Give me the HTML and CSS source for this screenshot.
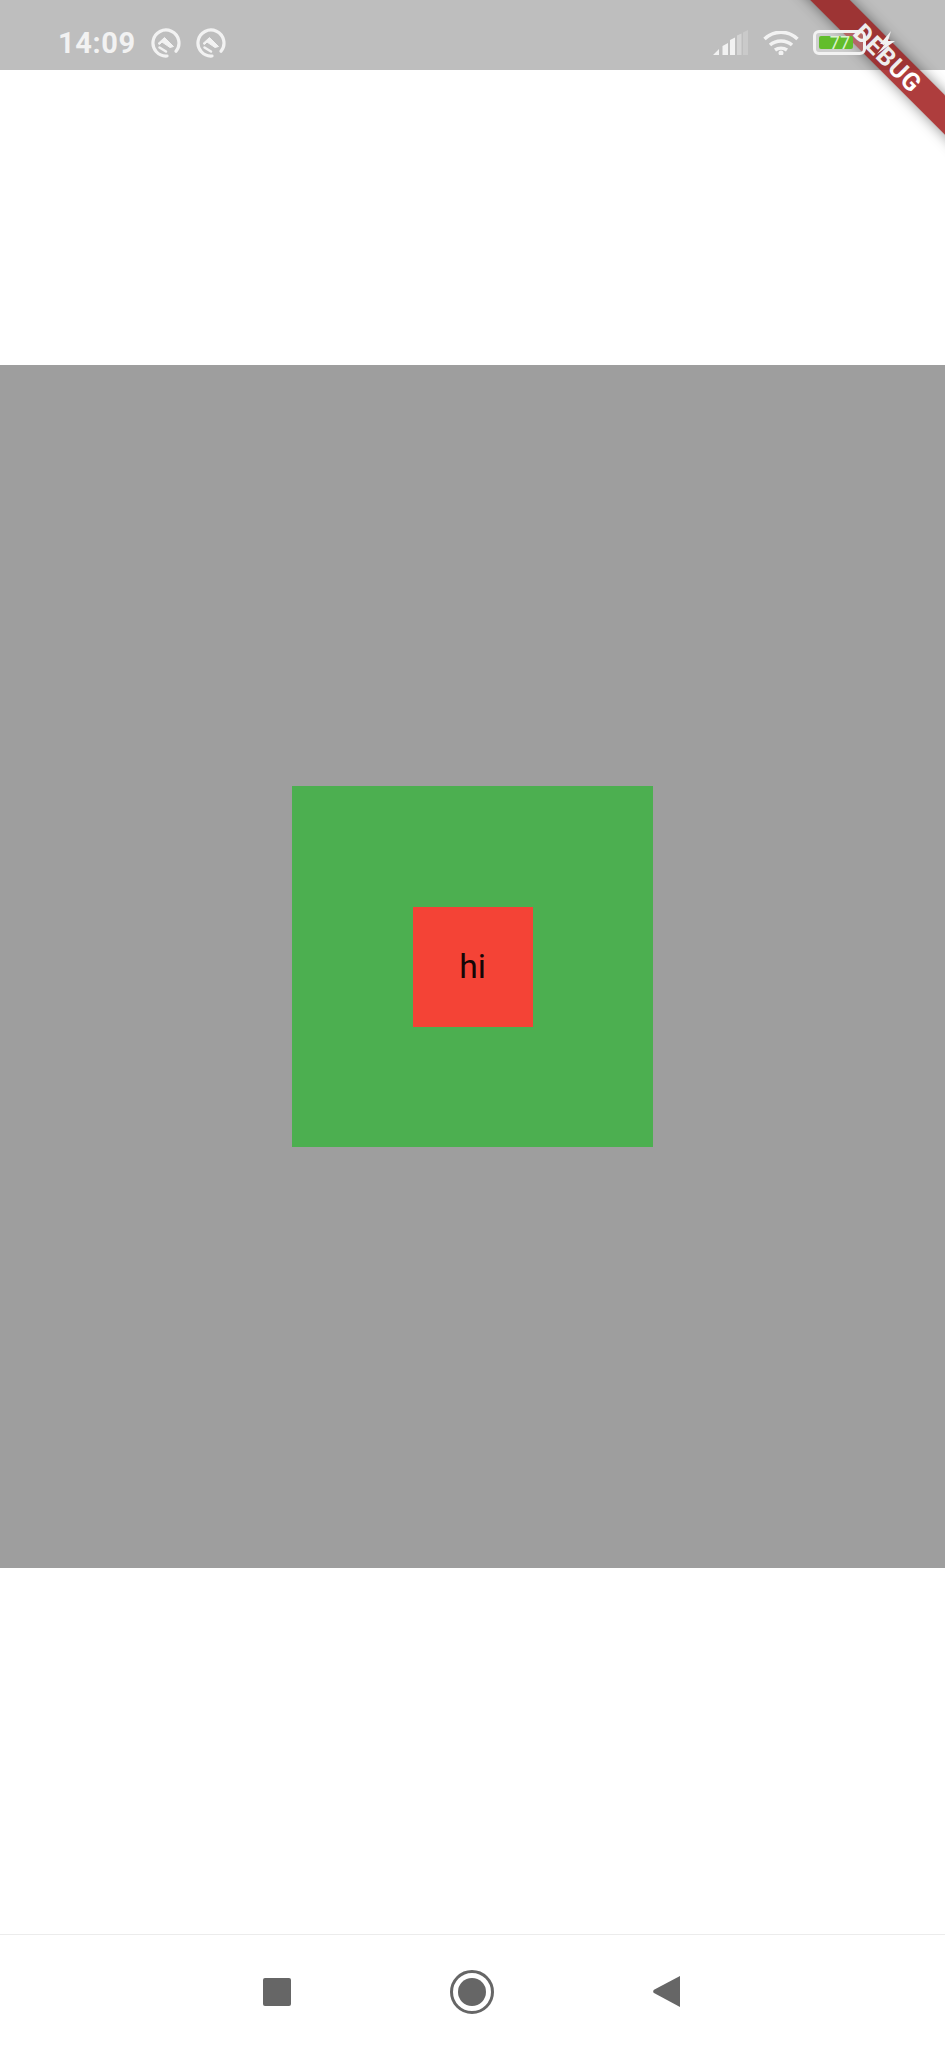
FILE: index.html
```html
<!DOCTYPE html>
<html lang="en">
<head>
<meta charset="utf-8">
<title>Nested boxes</title>
<link rel="stylesheet" href="styles.css">
</head>
<body>
<div class="screen">
  <header class="status">
    <div class="status-left">
      <span class="time">14:09</span>
      <svg class="q" viewBox="0 0 30 30"><path d="M16 28A13 13 0 1 1 25 23.300" fill="none" stroke="#f2f2f2" stroke-width="3.200" stroke-linecap="round"/><path d="M7 15.500 13.500 9.500l9 9-3.500 1-8-5.500-2.500 2.500z" fill="#f2f2f2" stroke="#f2f2f2" stroke-linejoin="round"/><path d="M8.500 19.500 15 23.500" fill="none" stroke="#f2f2f2" stroke-width="2.500" stroke-linecap="round"/></svg>
      <svg class="q" viewBox="0 0 30 30"><path d="M16 28A13 13 0 1 1 25 23.300" fill="none" stroke="#f2f2f2" stroke-width="3.200" stroke-linecap="round"/><path d="M7 15.500 13.500 9.500l9 9-3.500 1-8-5.500-2.500 2.500z" fill="#f2f2f2" stroke="#f2f2f2" stroke-linejoin="round"/><path d="M8.500 19.500 15 23.500" fill="none" stroke="#f2f2f2" stroke-width="2.500" stroke-linecap="round"/></svg>
    </div>
    <div class="status-right">
      <svg class="signal" viewBox="0 0 35 25"><path d="M0 25l6-6v6zM9.500 25v-9l5.500-3v12zM17 25V10l5-2.500V25z" fill="#f2f2f2"/><path d="M24 25V5.500l4.500-2V25z" fill="#d4d4d4"/><path d="M30 25V2.500L35 0v25z" fill="#cacaca"/></svg>
      <svg class="wifi" viewBox="0 0 36 24"><path d="M1.500 8C11-1 25-1 34.500 8M7 14c6-5.500 16-5.500 22 0M12 19c3.500-2.500 8.500-2.500 12 0" fill="none" stroke="#f2f2f2" stroke-width="3.500"/><circle cx="18" cy="22" r="2.500" fill="#f2f2f2"/></svg>
      <div class="battery"><span class="level">77</span></div>
      <svg class="bolt" viewBox="0 0 18 23"><path d="M14 0 3 13h5l-8 10 18-13h-7z" fill="#f2f2f2"/></svg>
    </div>
  </header>
  <main class="content">
    <div class="middle">
      <div class="inner">hi</div>
    </div>
  </main>
  <nav class="nav">
    <span class="nav-square"></span>
    <span class="nav-home"><span class="nav-dot"></span></span>
    <svg class="nav-back" viewBox="0 0 27 31"><path d="M27 0v31L1 17a2 2 0 0 1 0-3.200z" fill="#666"/></svg>
  </nav>
  <div class="banner"><span class="banner-text">DEBUG</span></div>
  <div class="status-scrim"></div>
</div>
</body>
</html>
```
FILE: styles.css
```css
html, body {
  margin: 0;
  padding: 0;
}

.screen {
  position: relative;
  width: 945px;
  height: 2048px;
  overflow: hidden;
  display: flex;
  flex-direction: column;
  background: #fff;
  font-family: Roboto, sans-serif;
}

.status {
  height: 70px;
  flex: none;
  background: #cdcdcd;
  display: flex;
  justify-content: space-between;
  align-items: center;
  padding: 15px 50px 0 58px;
  box-sizing: border-box;
}

.status-left,
.status-right {
  display: flex;
  align-items: center;
  position: relative;
  z-index: 3;
}

.status-left {
  gap: 15px;
}

.status-scrim {
  position: absolute;
  top: 0;
  left: 0;
  right: 0;
  height: 70px;
  z-index: 2;
  background: rgba(0, 0, 0, 0.07);
}

.time {
  font-size: 29px;
  font-weight: 700;
  letter-spacing: 0.6px;
  color: #f2f2f2;
}

.q {
  width: 30px;
  height: 30px;
}

.signal {
  width: 35px;
  height: 25px;
}

.wifi {
  width: 36px;
  height: 24px;
  margin-left: 15px;
}

.battery {
  width: 53px;
  height: 25px;
  margin-left: 14px;
  box-sizing: border-box;
  border: 3px solid #f2f2f2;
  border-radius: 6px;
  padding: 3px;
  background: rgba(255, 255, 255, 0.25);
}

.level {
  display: block;
  width: 34px;
  height: 13px;
  box-sizing: border-box;
  padding-right: 3px;
  background: #62bd2c;
  border-radius: 2px;
  color: #dcf2cf;
  font-size: 18px;
  line-height: 13px;
  text-align: right;
}

.bolt {
  width: 18px;
  height: 23px;
  margin-left: 11px;
}

.content {
  margin-top: 295px;
  height: 1203px;
  flex: none;
  background: #9e9e9e;
  display: flex;
  align-items: center;
  justify-content: center;
}

.middle {
  width: 361px;
  height: 361px;
  background: #4caf50;
  display: flex;
  align-items: center;
  justify-content: center;
}

.inner {
  width: 120px;
  height: 120px;
  background: #f44336;
  display: flex;
  align-items: center;
  justify-content: center;
  font-size: 33.6px;
  color: #140606;
}

.nav {
  margin-top: auto;
  height: 114px;
  flex: none;
  box-sizing: border-box;
  border-top: 1px solid #ececec;
  padding-right: 3px;
  display: flex;
  align-items: center;
  justify-content: center;
  gap: 159px;
}

.nav-square {
  width: 28px;
  height: 28px;
  background: #666;
  border-radius: 2px;
}

.nav-home {
  width: 44px;
  height: 44px;
  box-sizing: border-box;
  border: 3.5px solid #666;
  border-radius: 50%;
  display: flex;
  align-items: center;
  justify-content: center;
}

.nav-dot {
  width: 28px;
  height: 28px;
  background: #666;
  border-radius: 50%;
}

.nav-back {
  width: 27px;
  height: 31px;
}

.banner {
  position: absolute;
  top: 44px;
  right: -73px;
  z-index: 1;
  width: 260px;
  height: 28px;
  background: rgba(165, 40, 40, 0.9);
  box-shadow: 0 0 14px rgba(0, 0, 0, 0.45);
  transform: rotate(45deg);
  display: flex;
  align-items: center;
  justify-content: center;
}

.banner-text {
  color: #fff;
  font-size: 25px;
  font-weight: 700;
  letter-spacing: 1px;
}
```
